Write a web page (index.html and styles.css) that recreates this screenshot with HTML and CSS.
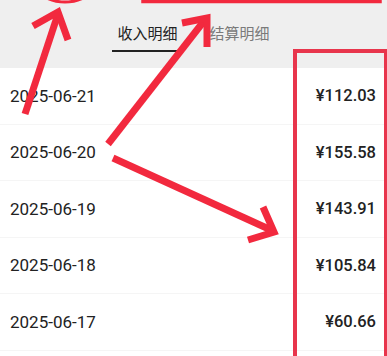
FILE: index.html
```html
<!DOCTYPE html>
<html lang="zh">
<head>
<meta charset="utf-8">
<link rel="stylesheet" href="styles.css">
</head>
<body>
<div class="page">
  <div class="header">
    <div class="tab active">收入明细</div>
    <div class="tab">结算明细</div>
  </div>
  <div class="list">
    <div class="row"><span class="date">2025-06-21</span><span class="amt">¥112.03</span></div>
    <div class="row"><span class="date">2025-06-20</span><span class="amt">¥155.58</span></div>
    <div class="row"><span class="date">2025-06-19</span><span class="amt">¥143.91</span></div>
    <div class="row"><span class="date">2025-06-18</span><span class="amt">¥105.84</span></div>
    <div class="row"><span class="date">2025-06-17</span><span class="amt">¥60.66</span></div>
  </div>
  <svg class="marks" width="387" height="356" viewBox="0 0 387 356">
    <g fill="none" stroke="#f2293e" stroke-width="7" stroke-linejoin="miter">
      <line x1="25" y1="114" x2="58" y2="14"/>
      <polyline points="33,26 58,12 68,40"/>
      <line x1="108" y1="144" x2="204" y2="21"/>
      <polyline points="182,23 207,18 207,47"/>
      <line x1="113" y1="158" x2="271" y2="230"/>
      <polyline points="263,207 274,232 248,240"/>
    </g>
    <ellipse cx="65" cy="-40" rx="42" ry="42" fill="none" stroke="#f2293e" stroke-width="3"/>
    <rect x="143" y="-40" width="237" height="41.5" fill="none" stroke="#f2293e" stroke-width="3.5"/>
    <rect x="295" y="51" width="91" height="400" fill="none" stroke="#e8354c" stroke-width="4"/>
  </svg>
</div>
</body>
</html>
```

FILE: styles.css
```css
html, body {
  margin: 0;
  padding: 0;
  background: #ffffff;
}
.page {
  position: relative;
  width: 387px;
  height: 356px;
  overflow: hidden;
  font-family: Roboto, "Noto Sans CJK SC", sans-serif;
  color: #222222;
}
.header {
  height: 68px;
  background: #efefef;
  display: flex;
  justify-content: center;
  align-items: flex-start;
  gap: 20px;
}
.tab {
  width: 72px;
  padding-top: 22px;
  padding-bottom: 6px;
  line-height: 22px;
  font-size: 15px;
  text-align: center;
  color: #7a7a7a;
  font-family: "Noto Sans CJK SC", sans-serif;
  border-bottom: 2px solid transparent;
}
.tab.active {
  color: #222222;
  border-bottom-color: #222222;
}
.list {
  display: flex;
  flex-direction: column;
}
.row {
  height: 56.5px;
  display: flex;
  align-items: center;
  justify-content: space-between;
  padding: 0 11px 0 10px;
  border-bottom: 1px solid #f5f5f5;
  box-sizing: border-box;
}
.date {
  font-size: 17px;
  color: #222222;
}
.amt {
  font-size: 16.5px;
  font-weight: 500;
  color: #222222;
}
.marks {
  position: absolute;
  left: 0;
  top: 0;
  pointer-events: none;
}
```
